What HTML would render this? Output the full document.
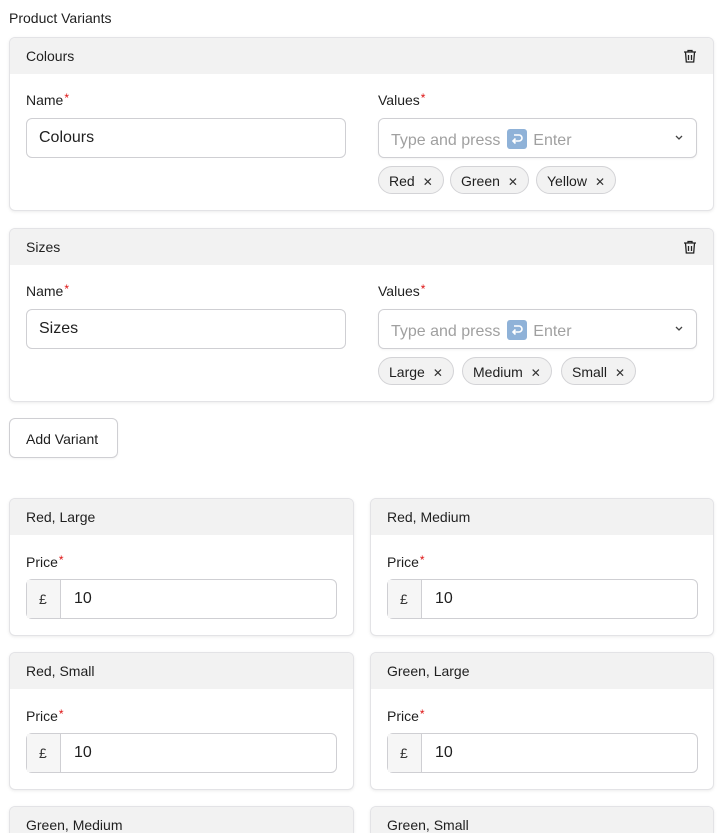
<!DOCTYPE html>
<html style="width:725px;height:833px;overflow:hidden"><head><meta charset="utf-8"><style>
*{box-sizing:border-box;margin:0;padding:0}
body{width:725px;height:833px;overflow:hidden;background:#fff;font-family:"Liberation Sans",sans-serif;color:#1f1f1f;position:relative}
.a{position:absolute}
.card{position:absolute;border:1px solid #e3e3e6;border-radius:6px;background:#fff;box-shadow:0 1px 3px rgba(0,0,0,.08);overflow:hidden}
.hd{position:absolute;left:0;right:0;top:0;height:36px;background:#f2f2f2;font-size:14px;padding:10px 16px 0}
.lbl{position:absolute;font-size:14px}
.lbl b{color:#d11;font-weight:normal;position:relative;top:-3px;margin-left:1px;font-size:12px}
.inp{position:absolute;border:1px solid #cfcfd3;border-radius:6px;height:40px;font-size:16px;padding:10px 12px;background:#fff}
.chip{position:absolute;top:0;height:28px;border:1px solid #d3d3d6;border-radius:14px;background:#f2f2f2;font-size:14px;padding:6px 10px 0 10px;white-space:nowrap}
.chip i{font-style:normal;font-size:12px;margin-left:8px;color:#333}
.pre{position:absolute;left:0;top:0;bottom:0;width:34px;background:#f6f6f6;border-right:1px solid #cfcfd3;font-size:14px;padding:11px 0 0 12px;color:#333}
.ek{display:inline-block;width:20px;height:20px;background:#8fb2d8;border-radius:3px;vertical-align:-4px;margin:0 2px;position:relative}
.ek svg{position:absolute;left:3px;top:3px}
</style></head><body>
<div class="a" style="left:9px;top:10px;font-size:14px">Product Variants</div>

<div class="card" style="left:9px;top:37px;width:705px;height:174px">
 <div class="hd">Colours</div>
 <svg class="a" style="left:672px;top:10px" width="16" height="16" viewBox="0 0 16 16" fill="none" stroke="#222" stroke-width="1.3"><path d="M2 4h12M6 4V2.5h4V4M3.5 4l.8 10h7.4l.8-10M6.5 7v5M9.5 7v5"/></svg>
 <div class="lbl" style="left:16px;top:54px">Name<b>*</b></div>
 <div class="inp" style="left:16px;top:80px;width:320px">Colours</div>
 <div class="lbl" style="left:368px;top:54px">Values<b>*</b></div>
 <div class="inp" style="left:368px;top:80px;width:319px;color:#a0a0a0;box-shadow:0 1px 2px rgba(0,0,0,.05)">Type and press <span class="ek"><svg width="14" height="14" viewBox="0 0 14 14" fill="none" stroke="#fff" stroke-width="1.6"><path d="M4 3h5a3 3 0 010 6H3M5.5 6.5L3 9l2.5 2.5"/></svg></span> Enter
  <svg class="a" style="right:12px;top:16px" width="10" height="6" viewBox="0 0 10 6" fill="none" stroke="#444" stroke-width="1.3"><path d="M2 1l3 3 3-3"/></svg></div>
 <div class="a" style="left:368px;top:128px">
  <div class="chip" style="left:0">Red<i>✕</i></div>
  <div class="chip" style="left:72px">Green<i>✕</i></div>
  <div class="chip" style="left:158px">Yellow<i>✕</i></div>
 </div>
</div>

<div class="card" style="left:9px;top:228px;width:705px;height:174px">
 <div class="hd">Sizes</div>
 <svg class="a" style="left:672px;top:10px" width="16" height="16" viewBox="0 0 16 16" fill="none" stroke="#222" stroke-width="1.3"><path d="M2 4h12M6 4V2.5h4V4M3.5 4l.8 10h7.4l.8-10M6.5 7v5M9.5 7v5"/></svg>
 <div class="lbl" style="left:16px;top:54px">Name<b>*</b></div>
 <div class="inp" style="left:16px;top:80px;width:320px">Sizes</div>
 <div class="lbl" style="left:368px;top:54px">Values<b>*</b></div>
 <div class="inp" style="left:368px;top:80px;width:319px;color:#a0a0a0;box-shadow:0 1px 2px rgba(0,0,0,.05)">Type and press <span class="ek"><svg width="14" height="14" viewBox="0 0 14 14" fill="none" stroke="#fff" stroke-width="1.6"><path d="M4 3h5a3 3 0 010 6H3M5.5 6.5L3 9l2.5 2.5"/></svg></span> Enter
  <svg class="a" style="right:12px;top:16px" width="10" height="6" viewBox="0 0 10 6" fill="none" stroke="#444" stroke-width="1.3"><path d="M2 1l3 3 3-3"/></svg></div>
 <div class="a" style="left:368px;top:128px">
  <div class="chip" style="left:0">Large<i>✕</i></div>
  <div class="chip" style="left:84px">Medium<i>✕</i></div>
  <div class="chip" style="left:183px">Small<i>✕</i></div>
 </div>
</div>

<div class="a" style="left:9px;top:418px;width:109px;height:40px;border:1px solid #cfcfd3;border-radius:6px;font-size:14px;padding:12px 0 0 16px;box-shadow:0 1px 2px rgba(0,0,0,.05)">Add Variant</div>

<div class="card" style="left:9px;top:498px;width:345px;height:138px"><div class="hd">Red, Large</div><div class="lbl" style="left:16px;top:55px">Price<b>*</b></div><div class="inp" style="left:16px;top:80px;width:311px;padding-left:47px">10<div class="pre">£</div></div></div>
<div class="card" style="left:370px;top:498px;width:344px;height:138px"><div class="hd">Red, Medium</div><div class="lbl" style="left:16px;top:55px">Price<b>*</b></div><div class="inp" style="left:16px;top:80px;width:311px;padding-left:47px">10<div class="pre">£</div></div></div>
<div class="card" style="left:9px;top:652px;width:345px;height:138px"><div class="hd">Red, Small</div><div class="lbl" style="left:16px;top:55px">Price<b>*</b></div><div class="inp" style="left:16px;top:80px;width:311px;padding-left:47px">10<div class="pre">£</div></div></div>
<div class="card" style="left:370px;top:652px;width:344px;height:138px"><div class="hd">Green, Large</div><div class="lbl" style="left:16px;top:55px">Price<b>*</b></div><div class="inp" style="left:16px;top:80px;width:311px;padding-left:47px">10<div class="pre">£</div></div></div>
<div class="card" style="left:9px;top:806px;width:345px;height:27px;border-bottom:none;border-radius:6px 6px 0 0"><div class="hd">Green, Medium</div></div>
<div class="card" style="left:370px;top:806px;width:344px;height:27px;border-bottom:none;border-radius:6px 6px 0 0"><div class="hd">Green, Small</div></div>
</body></html>
